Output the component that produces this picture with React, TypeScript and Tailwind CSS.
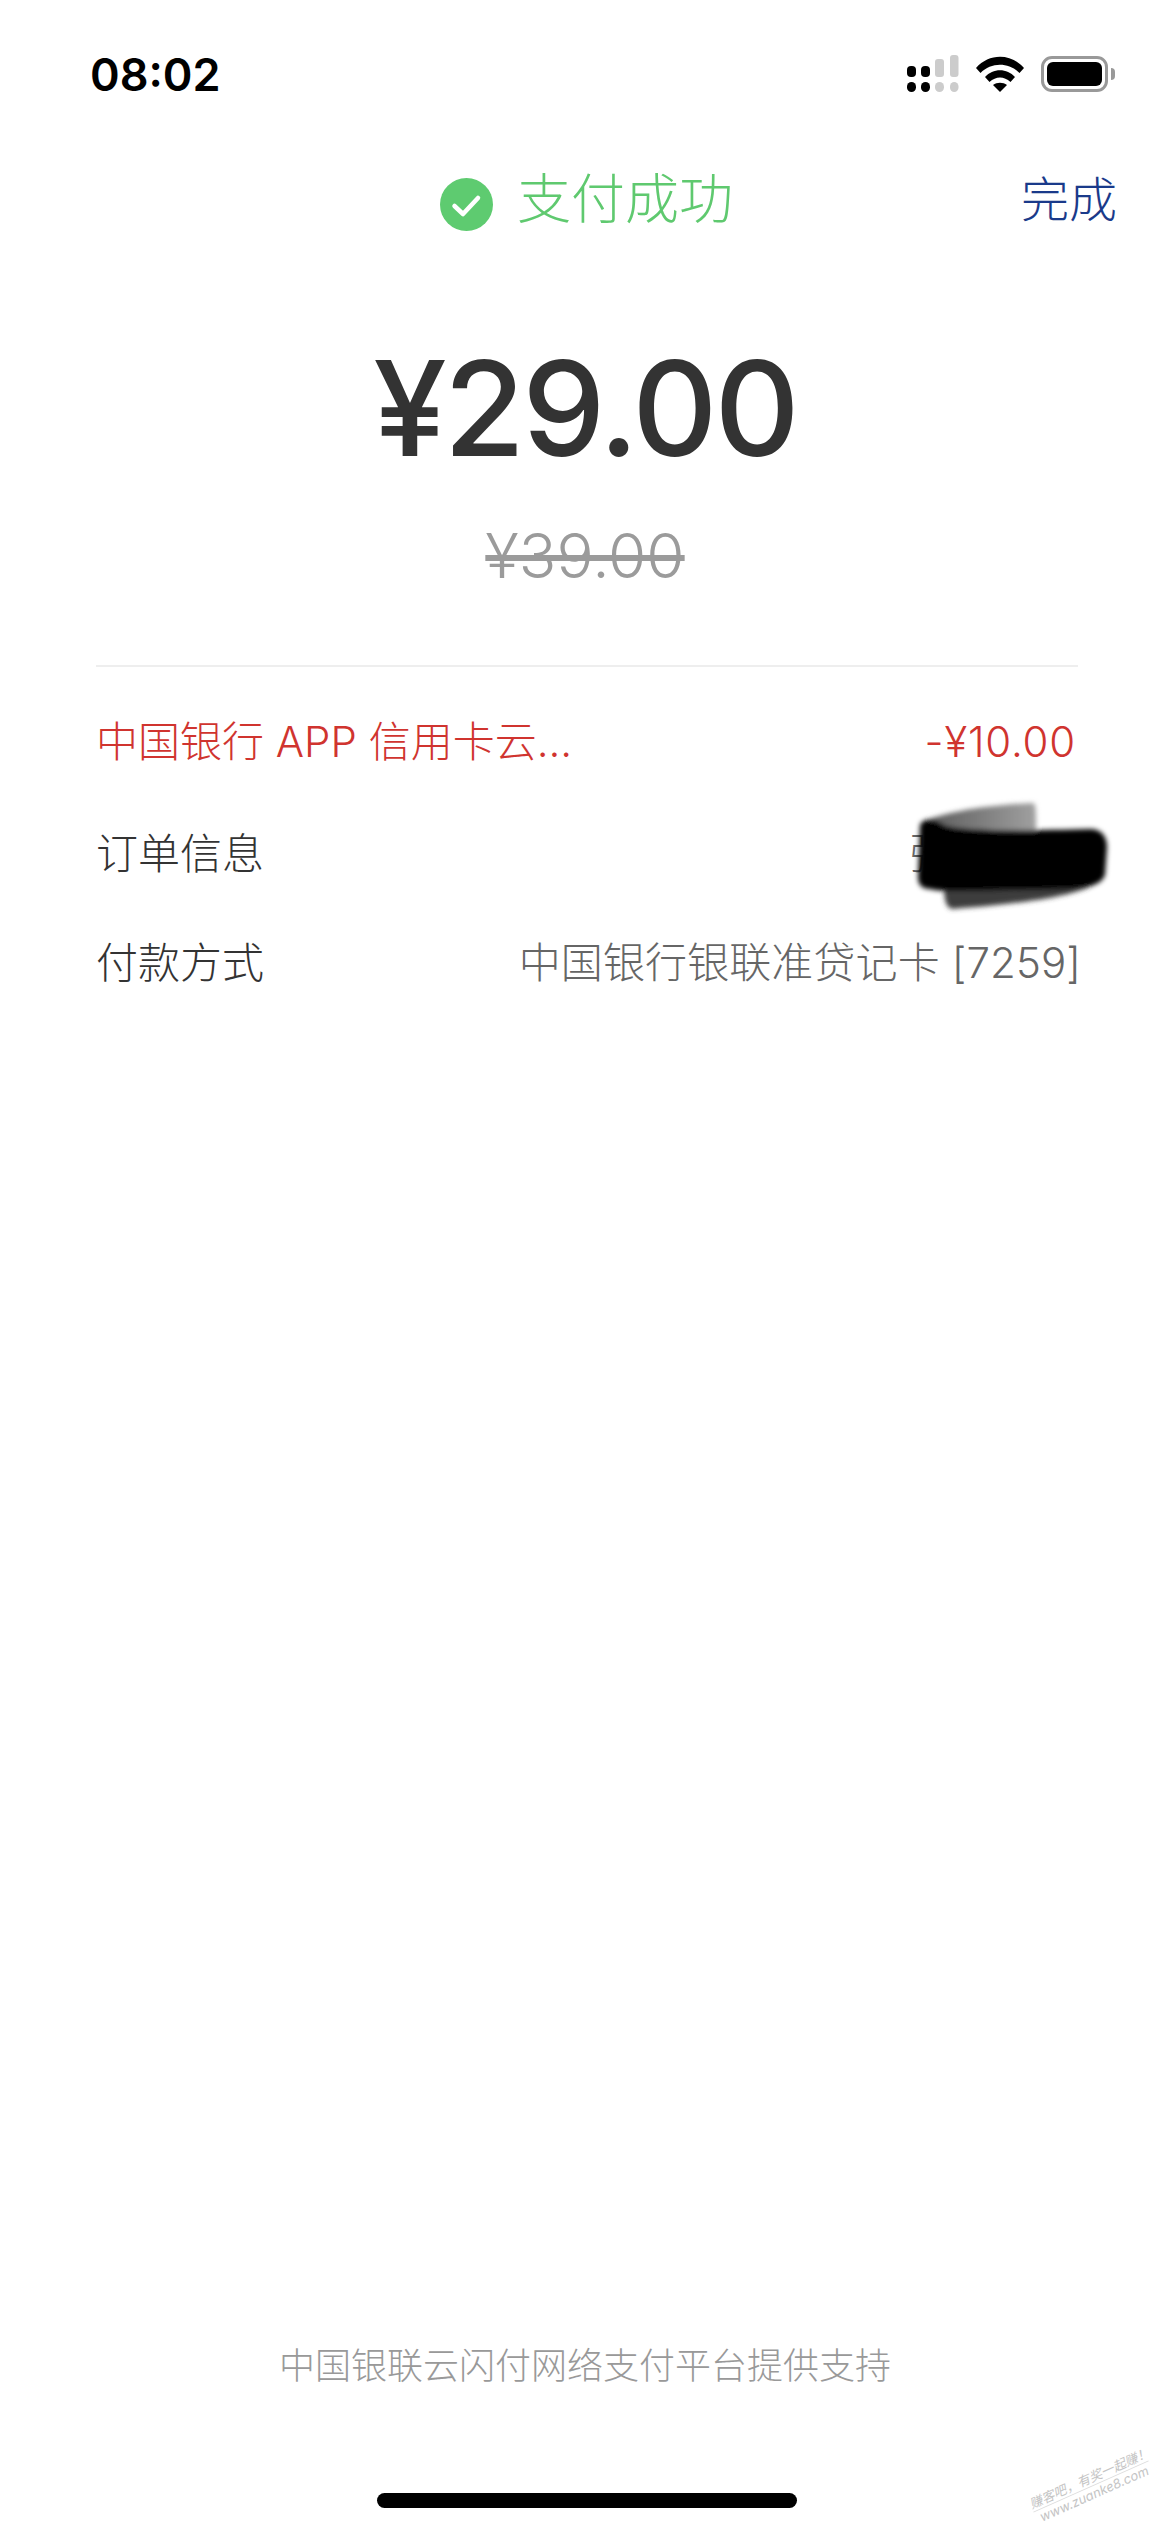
const cjk = "font-['Inter','Noto_Sans_CJK_SC',sans-serif]";

const SignalIcon = () => (
  <svg width="52" height="38" viewBox="0 0 52 38" className="block">
    <rect x="0" y="11" width="9" height="11" rx="4" fill="#000" />
    <rect x="14" y="11" width="9" height="11" rx="4" fill="#000" />
    <rect x="28" y="4" width="9" height="18" rx="3" fill="#ccc" />
    <rect x="43" y="0" width="8.5" height="22" rx="3" fill="#ccc" />
    <rect x="0" y="27" width="9" height="10" rx="4.5" fill="#000" />
    <rect x="14" y="27" width="9" height="10" rx="4.5" fill="#000" />
    <rect x="28" y="27" width="9" height="10" rx="4.5" fill="#ccc" />
    <rect x="43" y="27" width="8.5" height="10" rx="4.5" fill="#ccc" />
  </svg>
);

const WifiIcon = () => (
  <svg width="48" height="36" viewBox="0 0 48 36" className="block">
    <path d="M0 12 C13 -3 35 -3 48 12 L43.5 17 C33 6 15 6 4.5 17 Z" fill="#000" />
    <path d="M9 21 C17 12 31 12 39 21 L34.5 26 C28 20 20 20 13.5 26 Z" fill="#000" />
    <path d="M17 29 C21 26 27 26 31 29 L24 36 Z" fill="#000" />
  </svg>
);

const BatteryIcon = () => (
  <div className="flex items-center gap-[3px]">
    <div className="w-[67px] h-[36px] rounded-[11px] border-[3px] border-[#999] p-[3px]">
      <div className="w-full h-full rounded-[6px] bg-black" />
    </div>
    <div className="w-[4px] h-[12px] rounded-r-full bg-[#999]" />
  </div>
);

export default function App() {
  return (
    <div className={`relative flex flex-col w-[1170px] h-[2532px] bg-white overflow-hidden ${cjk}`}>
      <div className="flex items-center justify-between h-[36px] mt-[56px] pl-[90px] pr-[55px]">
        <span className="text-[45px] leading-none font-semibold text-black">08:02</span>
        <div className="flex items-center gap-[17px]">
          <SignalIcon />
          <WifiIcon />
          <BatteryIcon />
        </div>
      </div>

      <div className="grid grid-cols-[1fr_auto_1fr] items-center h-[54px] mt-[76px]">
        <div />
        <div className="flex items-center gap-[24px] pl-[3px]">
          <svg width="53" height="53" viewBox="0 0 53 53" className="block mt-[10px]">
            <circle cx="26.5" cy="26.5" r="26.5" fill="#5ecb70" />
            <path d="M14.5 28 L23 36 L38 20" fill="none" stroke="#fff" strokeWidth="4.5" strokeLinecap="round" strokeLinejoin="round" />
          </svg>
          <span className="text-[54px] leading-none font-light text-[#5fc96f]">支付成功</span>
        </div>
        <span className="justify-self-end pr-[53px] text-[48px] leading-none font-light text-[#1a3a8a]">完成</span>
      </div>

      <div className="mt-[120px] text-center text-[132px] leading-none font-medium text-[#333] tracking-[-3px]">¥29.00</div>
      <div className="mt-[51px] text-center text-[62px] leading-none font-light text-[#9b9b9b] line-through">¥39.00</div>

      <div className="ml-[96px] mr-[92px] mt-[78px] h-[2px] bg-[#eeeeee]" />

      <div className="flex flex-col gap-[70px] mt-[54px] pl-[96px] pr-[89px]">
        <div className="flex items-center justify-between h-[42px] text-[42px] leading-none font-light text-[#d0342f]">
          <span>中国银行 APP 信用卡云...</span>
          <span className="mr-[5px] tracking-[0.8px]">-¥10.00</span>
        </div>
        <div className="relative flex items-center justify-between h-[42px] text-[42px] leading-none font-light">
          <span className="text-[#333]">订单信息</span>
          <span className="mr-[131px] text-[#666]">张</span>
          {/* redaction scribble over the order text */}
          <svg width="230" height="130" viewBox="0 0 230 130" className="absolute right-[-49px] top-[-36px]">
            <defs>
              <filter id="soft" x="-10%" y="-10%" width="120%" height="120%">
                <feGaussianBlur stdDeviation="2.5" />
              </filter>
              <linearGradient id="smear" x1="0" y1="0" x2="1" y2="0">
                <stop offset="0" stopColor="#5a5a5a" />
                <stop offset="1" stopColor="#a0a0a0" />
              </linearGradient>
            </defs>
            <g filter="url(#soft)">
              <path d="M24 24 C50 14 90 8 132 6 C136 6 136 10 136 40 L30 40 Z" fill="url(#smear)" />
              <path d="M44 86 L198 84 C184 98 130 106 52 112 C46 110 44 104 44 86 Z" fill="#3c3c3c" />
              <path d="M20 28 C22 22 34 20 44 28 C60 34 120 34 190 32 C202 32 207 40 207 50 L205 78 C201 88 190 90 170 92 L60 94 C44 94 40 94 30 92 C22 92 18 88 18 80 Z" fill="#000" />
            </g>
          </svg>
        </div>
        <div className="-mt-[3px] flex items-center justify-between h-[42px] text-[42px] leading-none font-light">
          <span className="text-[#333]">付款方式</span>
          <span className="text-[#666] tracking-[0.1px]">中国银行银联准贷记卡 [7259]</span>
        </div>
      </div>

      <div className="mt-auto flex flex-col items-center">
        <span className="text-[36px] leading-none font-light text-[#999]">中国银联云闪付网络支付平台提供支持</span>
        <div className="mt-[109px] mb-[24px] ml-[4px] w-[420px] h-[15px] rounded-full bg-black" />
      </div>

      {/* forum watermark */}
      <div className="absolute right-[16px] bottom-[30px] w-[126px] -rotate-[24deg] text-center text-[13px] leading-[15px] text-[#c4c4c4] italic">
        <div className="border-b border-[#ddd] whitespace-nowrap">赚客吧，有奖一起赚！</div>
        <div className="whitespace-nowrap">www.zuanke8.com</div>
      </div>
    </div>
  );
}
